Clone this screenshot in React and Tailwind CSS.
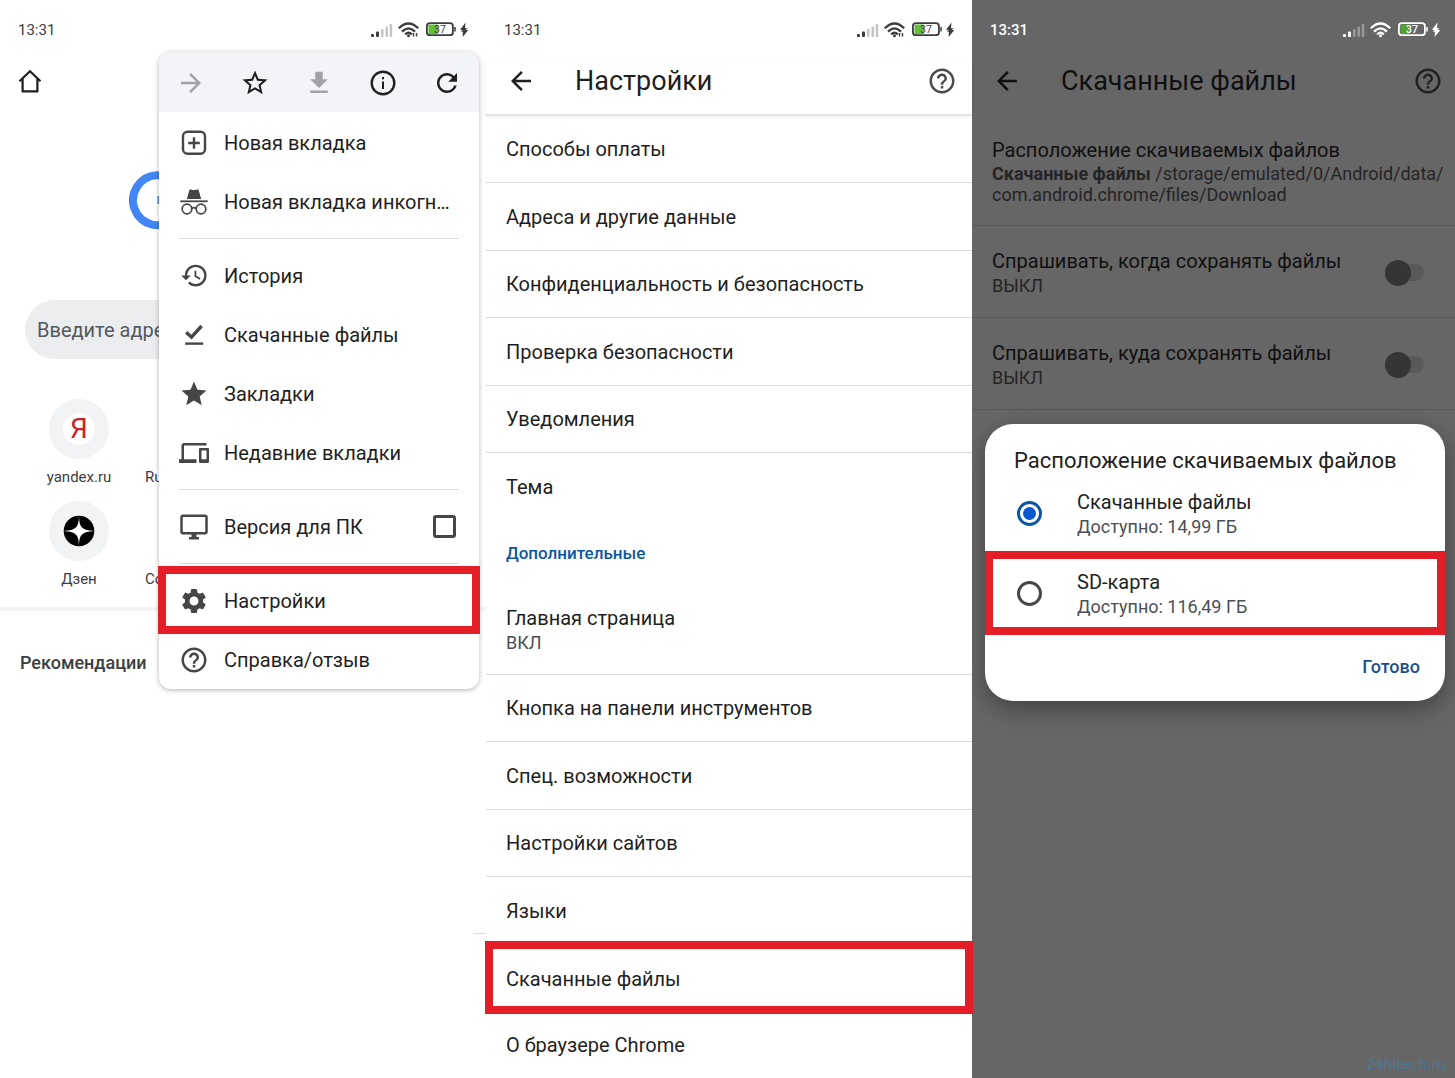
import {
  MdArrowBack,
  MdArrowForward,
  MdDevices,
  MdFileDownload,
  MdHelpOutline,
  MdHistory,
  MdOutlineDesktopWindows,
  MdRefresh,
  MdSettings,
  MdStar,
  MdStarBorder,
} from "react-icons/md";

function StatusBar({ inverted = false }) {
  const main = inverted ? "#ffffff" : "#3c3c3c";
  const weak = inverted ? "#9a9a9a" : "#c4c4c4";

  return (
    <div
      className={`flex h-[58px] items-center justify-between pt-0.5 pl-[18px] pr-4 text-[15px] ${
        inverted ? "font-medium text-white" : "text-[#3c3c3c]"
      }`}
    >
      <span>13:31</span>
      <svg width="100" height="20" viewBox="0 0 100 20" fill="none">
        <rect x="1" y="14" width="3" height="3" rx="1" fill={main} />
        <rect x="6" y="11.500" width="3" height="5.500" rx="1" fill={main} />
        <rect x="11" y="9" width="2.500" height="8" rx="1" fill={weak} />
        <rect x="15.500" y="6.500" width="2.500" height="10.500" rx="1" fill={weak} />
        <rect x="19.700" y="4" width="2.500" height="13" rx="1" fill={weak} />
        <g stroke={main} strokeWidth="2.300">
          <path d="M28.800 8.300Q38.500 -1.300 48.200 8.300" />
          <path d="M32 11.600Q38.500 5 45 11.600" />
          <path d="M35.200 14.500Q38.500 11 41.800 14.500" />
        </g>
        <circle cx="38.500" cy="15.800" r="1.500" fill={main} />
        {!inverted && (
          <path d="M43.500 13v3.500M46.500 16.500v-3.500" stroke={main} strokeWidth="1.400" />
        )}
        <rect x="58.500" y="4.500" width="9.500" height="9.500" rx="1" fill={inverted ? "#4fa52c" : "#62c132"} />
        <rect x="56.900" y="3.200" width="26" height="12" rx="3" stroke={main} strokeWidth="1.800" />
        <path d="M85 7v4.500" stroke={main} strokeWidth="1.500" />
        <text x="70" y="13" textAnchor="middle" fontSize="10.500" fill={main}>
          37
        </text>
        <path d="M95.500 2.500L90 9.700l2.800.4-2.200 1.400 2.300.3L92.600 17l5.600-6.700-2.800-.5 2.300-1.400-2.700-.3z" fill={main} />
      </svg>
    </div>
  );
}

function HomeIcon() {
  return (
    <svg width="24" height="24" viewBox="0 0 24 24" fill="none" stroke="#1f1f1f" strokeWidth="2.200">
      <path d="M1.500 12.200L12 2.200l10.500 10" />
      <path d="M4.600 10v12.400h14.800V10" strokeLinejoin="round" />
    </svg>
  );
}

function InfoIcon() {
  return (
    <svg width="30" height="30" viewBox="0 0 30 30" fill="none" stroke="#1f1f1f">
      <circle cx="15" cy="15" r="11.300" strokeWidth="2.400" />
      <path d="M15 13.500v7.500M15 9v2.300" strokeWidth="2" />
    </svg>
  );
}

function NewTabIcon() {
  return (
    <svg width="30" height="30" viewBox="0 0 30 30" fill="none" stroke="currentColor" strokeWidth="2.400">
      <rect x="4" y="3.800" width="22" height="22" rx="4.500" />
      <path d="M15 9.200v11.600M9.200 15h11.600" />
    </svg>
  );
}

function IncognitoIcon() {
  return (
    <svg width="30" height="30" viewBox="0 0 30 30" fill="none" stroke="currentColor">
      <path d="M7.800 12L10.400 3q.5-1 1.500-.6 3.100 1 6.200 0 1-.4 1.500.6l2.600 9z" fill="currentColor" stroke="none" />
      <path d="M1.300 14.300h27.400" strokeWidth="1.800" />
      <circle cx="8" cy="22" r="4.800" strokeWidth="1.700" />
      <circle cx="22" cy="22" r="4.800" strokeWidth="1.700" />
      <path d="M12.600 21.500q2.400-1.600 4.800 0" strokeWidth="1.700" />
    </svg>
  );
}

function DownloadDoneIcon() {
  return (
    <svg width="30" height="30" viewBox="0 0 30 30" fill="none" stroke="currentColor">
      <path d="M7.200 12.300l5.300 4.900L22.600 6" strokeWidth="3.400" />
      <path d="M6.200 23.600h18" strokeWidth="2.400" />
    </svg>
  );
}

function GoogleLetter() {
  return (
    <svg width="58" height="58" viewBox="0 0 58 58" fill="none" stroke="#4285f4" strokeWidth="8">
      <path d="M48 13A25 25 0 1 0 54 29H28.500" />
    </svg>
  );
}

function ZenIcon() {
  return (
    <svg width="32" height="32" viewBox="0 0 32 32">
      <circle cx="16" cy="16" r="15.300" fill="#000" />
      <path
        d="M16 0.500C16.400 11.500 17.500 15 31.500 16 17.500 17 16.400 20.500 16 31.500 15.600 20.500 14.500 17 .5 16 14.500 15 15.600 11.500 16 .5z"
        fill="#fff"
      />
    </svg>
  );
}

function Tile({ label, nextLabel, children }) {
  return (
    <div className="flex h-[102px] items-end">
      <a href="#tile" className="ml-[21px] flex w-[116px] flex-col items-center gap-2">
        <span className="flex size-[60px] items-center justify-center rounded-full bg-[#f1f3f4]">
          {children}
        </span>
        <span className="text-[15px] leading-[20px]">{label}</span>
      </a>
      <a href="#tile" className="ml-2 text-[15px] leading-[20px]">
        {nextLabel}
      </a>
    </div>
  );
}

function MenuItem({ icon, label, marked = false }) {
  return (
    <li className="relative">
      <button className="flex h-[59px] w-full items-center pl-5 pr-5 text-left">
        <span className="mr-[15px] flex w-[30px] shrink-0 justify-center text-[#444746]">{icon}</span>
        <span className="truncate">{label}</span>
      </button>
      {marked && (
        <span className="pointer-events-none absolute -inset-x-px -top-[5px] -bottom-[4px] border-8 border-[#e41e26]" />
      )}
    </li>
  );
}

function MenuDivider() {
  return (
    <li className="flex h-[15px] items-center px-5">
      <hr className="w-full border-[#dadce0]" />
    </li>
  );
}

function BrowserMenu() {
  return (
    <div className="absolute top-[52px] right-[7px] w-[320px] rounded-xl bg-white text-xl text-[#1f1f1f] shadow-[0_1px_5px_rgba(0,0,0,0.3)]">
      <div className="flex h-[60px] items-center justify-between rounded-t-xl bg-[#f2f4f7] px-[17px] pt-0.5">
        <button aria-label="Вперёд">
          <MdArrowForward size={30} className="text-[#a0a2a4]" />
        </button>
        <button aria-label="Добавить закладку">
          <MdStarBorder size={30} />
        </button>
        <button aria-label="Скачать">
          <MdFileDownload size={30} className="text-[#a0a2a4]" />
        </button>
        <button aria-label="О странице">
          <InfoIcon />
        </button>
        <button aria-label="Обновить">
          <MdRefresh size={30} />
        </button>
      </div>

      <ul className="pt-px">
        <MenuItem icon={<NewTabIcon />} label="Новая вкладка" />
        <MenuItem icon={<IncognitoIcon />} label="Новая вкладка инкогн…" />
        <MenuDivider />
        <MenuItem icon={<MdHistory size={29} />} label="История" />
        <MenuItem icon={<DownloadDoneIcon />} label="Скачанные файлы" />
        <MenuItem icon={<MdStar size={30} />} label="Закладки" />
        <MenuItem icon={<MdDevices size={30} />} label="Недавние вкладки" />
        <MenuDivider />
        <li>
          <label className="flex h-[59px] items-center pl-5 pr-[23px]">
            <MdOutlineDesktopWindows size={30} className="mr-[15px] text-[#444746]" />
            <span>Версия для ПК</span>
            <input
              type="checkbox"
              className="ml-auto size-[23px] appearance-none rounded-[3px] border-[3px] border-[#444746]"
            />
          </label>
        </li>
        <MenuDivider />
        <MenuItem icon={<MdSettings size={30} />} label="Настройки" marked />
        <MenuItem icon={<MdHelpOutline size={30} />} label="Справка/отзыв" />
      </ul>
    </div>
  );
}

function StartScreen() {
  return (
    <section className="relative overflow-hidden bg-white text-[#3c4043]">
      <StatusBar />
      <button aria-label="Главная страница" className="ml-[18px] mt-[11px] block">
        <HomeIcon />
      </button>
      <div className="mt-[78px] pl-[129px]">
        <GoogleLetter />
      </div>
      <input
        type="text"
        aria-label="Поиск"
        placeholder="Введите адрес"
        className="mt-[71px] ml-[25px] block h-[59px] w-[436px] rounded-full bg-[#ecedef] px-3 text-xl placeholder:text-[#55585c]"
      />
      <div className="pt-[26px]">
        <Tile label="yandex.ru" nextLabel="Ru">
          <span className="flex size-8 items-center justify-center rounded-full bg-white font-['Liberation_Sans_Narrow','Roboto'] text-[28px] leading-8 text-[#c4262b]">
            Я
          </span>
        </Tile>
        <Tile label="Дзен" nextLabel="Со">
          <ZenIcon />
        </Tile>
      </div>
      <hr className="mt-[18px] border-t-4 border-[#f1f3f4]" />
      <h2 className="mt-10 ml-5 text-[18px] leading-6 font-medium">Рекомендации</h2>
      <hr className="mt-[258px] ml-auto w-[13px] border-[#dadce0]" />
      <BrowserMenu />
    </section>
  );
}

function TopBar({ title }) {
  return (
    <header className="flex h-[46px] items-center pl-5 pr-[15px]">
      <button aria-label="Назад">
        <MdArrowBack size={30} />
      </button>
      <h1 className="ml-[39px] flex-1 text-[27px] leading-9">{title}</h1>
      <button aria-label="Справка">
        <MdHelpOutline size={30} className="opacity-80" />
      </button>
    </header>
  );
}

function SettingsRow({ label, marked = false, last = false }) {
  return (
    <li className="relative h-[67px] even:h-[68px]">
      <a
        href="#settings"
        className={`flex h-full items-center border-[#dadce0] px-5 ${last ? "" : "border-b"}`}
      >
        {label}
      </a>
      {marked && (
        <span className="pointer-events-none absolute -inset-x-px -top-[4px] -bottom-[2px] z-10 border-8 border-[#e41e26]" />
      )}
    </li>
  );
}

function SettingsScreen() {
  return (
    <section className="relative z-10 bg-white text-xl text-[#1f1f1f]">
      <StatusBar />
      <div className="h-[58px] border-b-2 border-[#e3e4e6] shadow-[0_1px_3px_rgba(0,0,0,0.08)]">
        <TopBar title="Настройки" />
      </div>
      <ul>
        <SettingsRow label="Способы оплаты" />
        <SettingsRow label="Адреса и другие данные" />
        <SettingsRow label="Конфиденциальность и безопасность" />
        <SettingsRow label="Проверка безопасности" />
        <SettingsRow label="Уведомления" />
        <SettingsRow label="Тема" last />
      </ul>
      <h2 className="flex h-[65px] items-center px-5 text-[17px] font-medium text-[#0b57a4]">
        Дополнительные
      </h2>
      <a href="#homepage" className="flex h-[89px] flex-col justify-center border-b border-[#dadce0] px-5">
        <span className="leading-[26px]">Главная страница</span>
        <span className="text-[18px] leading-[24px] text-[#4c4f52]">ВКЛ</span>
      </a>
      <ul>
        <SettingsRow label="Кнопка на панели инструментов" />
        <SettingsRow label="Спец. возможности" />
        <SettingsRow label="Настройки сайтов" />
        <SettingsRow label="Языки" last />
        <SettingsRow label="Скачанные файлы" marked last />
        <li className="flex h-[66px] items-center px-5">О браузере Chrome</li>
      </ul>
    </section>
  );
}

function SwitchRow({ label }) {
  return (
    <label className="flex h-[92px] items-center border-b border-[#5a5a5a] pt-0.5 pl-5 pr-[31px]">
      <span className="flex-1">
        <span className="block leading-[26px]">{label}</span>
        <span className="block text-[18px] leading-[24px] text-[#242424]">ВЫКЛ</span>
      </span>
      <input
        type="checkbox"
        role="switch"
        className="flex h-[17px] w-[39px] appearance-none items-center rounded-full bg-[#595959] before:size-[26px] before:shrink-0 before:rounded-full before:bg-[#353535]"
      />
    </label>
  );
}

function StorageOption({ label, free, checked = false, marked = false }) {
  return (
    <label className={`relative flex items-center ${marked ? "h-[84px]" : "h-[76px]"}`}>
      <input
        type="radio"
        name="storage"
        defaultChecked={checked}
        className="ml-8 mr-[35px] flex size-[25px] appearance-none items-center justify-center rounded-full border-[3px] border-[#444746] checked:border-[#0b57a4] checked:before:size-[13px] checked:before:rounded-full checked:before:bg-[#0b57d0]"
      />
      <span className="pt-0.5">
        <span className="block leading-[26px]">{label}</span>
        <span className="block text-[18px] leading-[24px] text-[#4c4f52]">{free}</span>
      </span>
      {marked && (
        <span className="pointer-events-none absolute inset-0 border-8 border-[#e41e26]" />
      )}
    </label>
  );
}

function LocationDialog() {
  return (
    <div
      role="dialog"
      aria-label="Расположение скачиваемых файлов"
      className="absolute top-[424px] right-[10px] left-[13px] rounded-[28px] bg-white text-xl text-[#1f1f1f] shadow-[0_8px_24px_rgba(0,0,0,0.35)]"
    >
      <h2 className="pt-[22px] pl-[29px] text-[22px] leading-[29px]">
        Расположение скачиваемых файлов
      </h2>
      <StorageOption label="Скачанные файлы" free="Доступно: 14,99 ГБ" checked />
      <StorageOption label="SD-карта" free="Доступно: 116,49 ГБ" marked />
      <div className="flex justify-end pt-5 pr-[25px] pb-[22px]">
        <button className="text-[18px] leading-[24px] font-medium text-[#174f8f]">Готово</button>
      </div>
    </div>
  );
}

function DownloadsScreen() {
  return (
    <section className="relative flex flex-col overflow-hidden bg-[#666666] text-xl text-[#101010]">
      <div className="-mr-[3px]">
        <StatusBar inverted />
        <TopBar title="Скачанные файлы" />
      </div>
      <a href="#location" className="mt-[33px] block h-[89px] border-b border-[#5a5a5a] pl-5">
        <span className="block leading-[26px]">Расположение скачиваемых файлов</span>
        <span className="block text-[18px] leading-[21px] text-[#242424]">
          <b>Скачанные файлы</b> /storage/emulated/0/Android/data/
          <br />
          com.android.chrome/files/Download
        </span>
      </a>
      <SwitchRow label="Спрашивать, когда сохранять файлы" />
      <SwitchRow label="Спрашивать, куда сохранять файлы" />
      <span className="mt-auto pr-[9px] pb-1 text-right font-['DejaVu_Sans'] text-[14px] leading-[20px] text-[#4b7698]">
        24hitech.ru
      </span>
      <LocationDialog />
    </section>
  );
}

export default function App() {
  return (
    <main className="grid min-h-screen grid-cols-[486fr_486fr_483fr] font-[Roboto,sans-serif]">
      <StartScreen />
      <SettingsScreen />
      <DownloadsScreen />
    </main>
  );
}
